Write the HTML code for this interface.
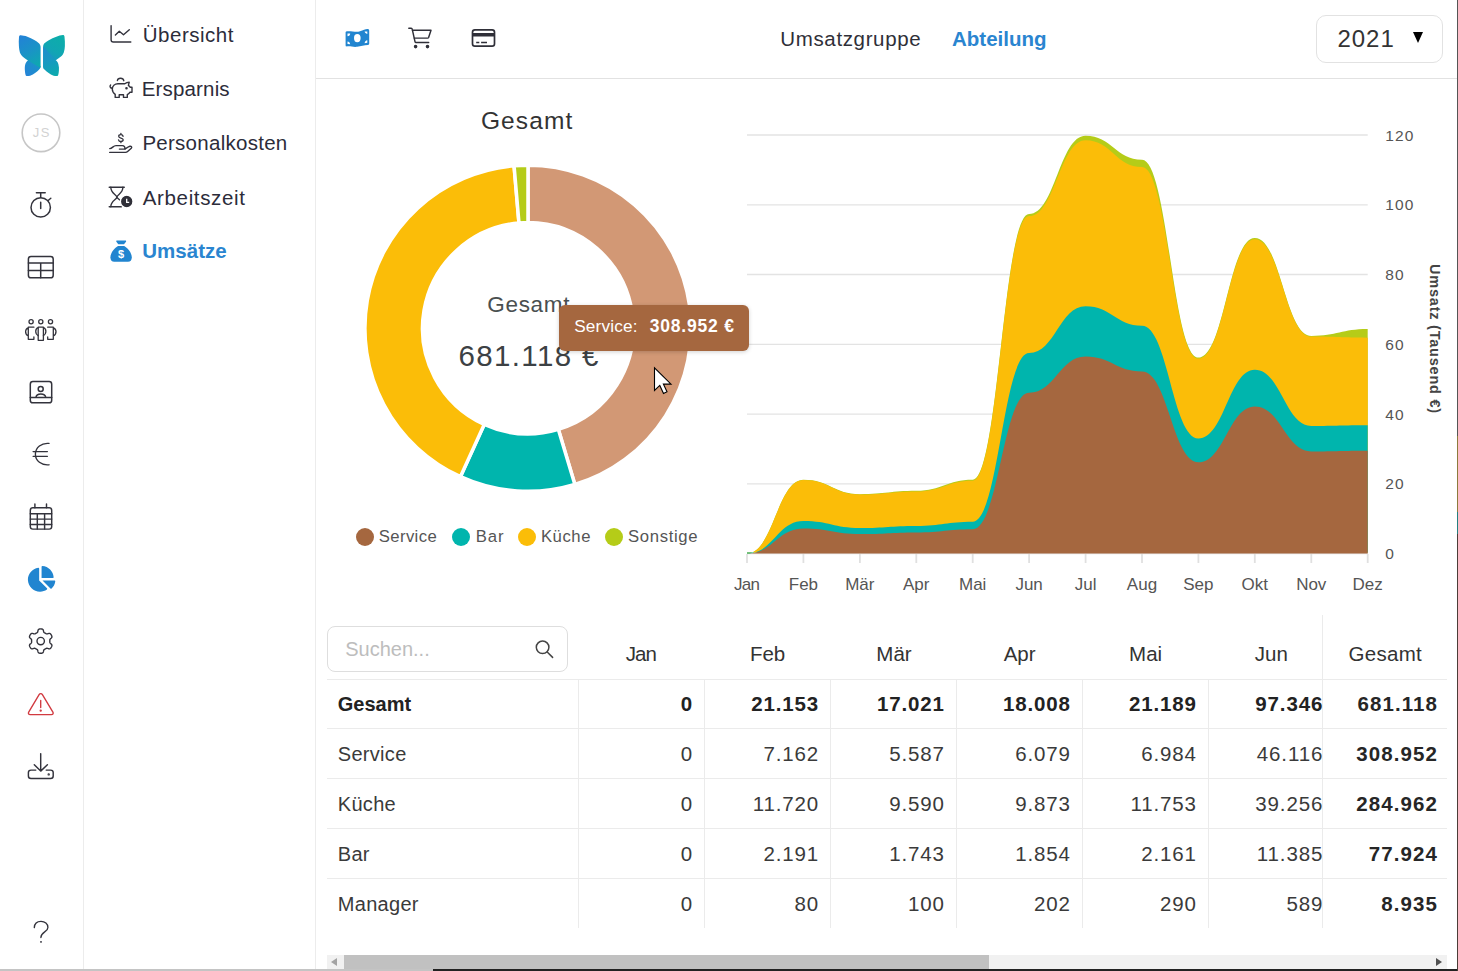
<!DOCTYPE html>
<html lang="de">
<head>
<meta charset="utf-8">
<title>Umsätze</title>
<style>
html,body{margin:0;padding:0;}
body{width:1458px;height:971px;overflow:hidden;background:#fff;position:relative;font-family:"Liberation Sans",sans-serif;color:#333;}
.abs{position:absolute;}
.t{position:absolute;white-space:nowrap;}
.dot{position:absolute;top:527.7px;width:18.2px;height:18.2px;border-radius:50%;}
</style>
</head>
<body>

<!-- sidebar borders -->
<div class="abs" style="left:83px;top:0;width:1px;height:969px;background:#ececec"></div>
<div class="abs" style="left:315px;top:0;width:1px;height:969px;background:#ececec"></div>
<div class="abs" style="left:316px;top:78px;width:1142px;height:1px;background:#e2e2e2"></div>

<!-- year select -->
<div class="abs" style="left:1316px;top:15px;width:125px;height:46px;border:1px solid #e2e2e2;border-radius:10px"></div>
<div class="abs" style="left:1413px;top:32px;width:0;height:0;border-left:5px solid transparent;border-right:5px solid transparent;border-top:11px solid #000"></div>

<!-- charts -->
<svg class="abs" style="left:0;top:0" width="1458" height="971" viewBox="0 0 1458 971">
<line x1="747.0" x2="1367.7" y1="553.6" y2="553.6" stroke="#e3e3e3" stroke-width="1.3"/>
<line x1="747.0" x2="1367.7" y1="483.8" y2="483.8" stroke="#e3e3e3" stroke-width="1.3"/>
<line x1="747.0" x2="1367.7" y1="414.1" y2="414.1" stroke="#e3e3e3" stroke-width="1.3"/>
<line x1="747.0" x2="1367.7" y1="344.3" y2="344.3" stroke="#e3e3e3" stroke-width="1.3"/>
<line x1="747.0" x2="1367.7" y1="274.5" y2="274.5" stroke="#e3e3e3" stroke-width="1.3"/>
<line x1="747.0" x2="1367.7" y1="204.8" y2="204.8" stroke="#e3e3e3" stroke-width="1.3"/>
<line x1="747.0" x2="1367.7" y1="135.0" y2="135.0" stroke="#e3e3e3" stroke-width="1.3"/>

<path d="M747.0,552.4 L747.0,553.6 C773.0,553.6 777.5,479.8 803.4,479.8 C829.4,479.8 833.9,494.2 859.9,494.2 C885.8,494.2 890.3,490.8 916.3,490.8 C942.2,490.8 946.8,479.7 972.7,479.7 C998.7,479.7 1003.2,214.0 1029.1,214.0 C1055.1,214.0 1059.6,135.7 1085.6,135.7 C1111.5,135.7 1116.0,159.8 1142.0,159.8 C1167.9,159.8 1172.5,357.6 1198.4,357.6 C1224.4,357.6 1228.9,237.9 1254.8,237.9 C1280.8,237.9 1285.3,335.9 1311.3,335.9 C1337.2,335.9 1341.7,329.0 1367.7,329.0 L1367.7,552.4 Z" fill="#b5cc18"/>
<path d="M747.0,552.4 L747.0,553.6 C773.0,553.6 777.5,480.1 803.4,480.1 C829.4,480.1 833.9,494.6 859.9,494.6 C885.8,494.6 890.3,491.5 916.3,491.5 C942.2,491.5 946.8,480.7 972.7,480.7 C998.7,480.7 1003.2,216.1 1029.1,216.1 C1055.1,216.1 1059.6,140.2 1085.6,140.2 C1111.5,140.2 1116.0,167.1 1142.0,167.1 C1167.9,167.1 1172.5,358.6 1198.4,358.6 C1224.4,358.6 1228.9,239.3 1254.8,239.3 C1280.8,239.3 1285.3,336.6 1311.3,336.6 C1337.2,336.6 1341.7,337.7 1367.7,337.7 L1367.7,552.4 Z" fill="#fbbd08"/>
<path d="M747.0,552.4 L747.0,553.6 C773.0,553.6 777.5,521.0 803.4,521.0 C829.4,521.0 833.9,528.0 859.9,528.0 C885.8,528.0 890.3,525.9 916.3,525.9 C942.2,525.9 946.8,521.7 972.7,521.7 C998.7,521.7 1003.2,353.0 1029.1,353.0 C1055.1,353.0 1059.6,306.3 1085.6,306.3 C1111.5,306.3 1116.0,325.8 1142.0,325.8 C1167.9,325.8 1172.5,438.5 1198.4,438.5 C1224.4,438.5 1228.9,369.8 1254.8,369.8 C1280.8,369.8 1285.3,425.9 1311.3,425.9 C1337.2,425.9 1341.7,425.2 1367.7,425.2 L1367.7,552.4 Z" fill="#00b5ad"/>
<path d="M747.0,553.6 L747.0,553.6 C773.0,553.6 777.5,528.6 803.4,528.6 C829.4,528.6 833.9,534.1 859.9,534.1 C885.8,534.1 890.3,532.4 916.3,532.4 C942.2,532.4 946.8,529.2 972.7,529.2 C998.7,529.2 1003.2,392.7 1029.1,392.7 C1055.1,392.7 1059.6,356.5 1085.6,356.5 C1111.5,356.5 1116.0,371.5 1142.0,371.5 C1167.9,371.5 1172.5,462.2 1198.4,462.2 C1224.4,462.2 1228.9,406.4 1254.8,406.4 C1280.8,406.4 1285.3,451.4 1311.3,451.4 C1337.2,451.4 1341.7,450.7 1367.7,450.7 L1367.7,553.6 Z" fill="#a5673f"/>
<line x1="747.0" x2="747.0" y1="554" y2="563" stroke="#e0e0e0" stroke-width="1.8"/>
<line x1="803.4" x2="803.4" y1="554" y2="563" stroke="#e0e0e0" stroke-width="1.8"/>
<line x1="859.9" x2="859.9" y1="554" y2="563" stroke="#e0e0e0" stroke-width="1.8"/>
<line x1="916.3" x2="916.3" y1="554" y2="563" stroke="#e0e0e0" stroke-width="1.8"/>
<line x1="972.7" x2="972.7" y1="554" y2="563" stroke="#e0e0e0" stroke-width="1.8"/>
<line x1="1029.1" x2="1029.1" y1="554" y2="563" stroke="#e0e0e0" stroke-width="1.8"/>
<line x1="1085.6" x2="1085.6" y1="554" y2="563" stroke="#e0e0e0" stroke-width="1.8"/>
<line x1="1142.0" x2="1142.0" y1="554" y2="563" stroke="#e0e0e0" stroke-width="1.8"/>
<line x1="1198.4" x2="1198.4" y1="554" y2="563" stroke="#e0e0e0" stroke-width="1.8"/>
<line x1="1254.8" x2="1254.8" y1="554" y2="563" stroke="#e0e0e0" stroke-width="1.8"/>
<line x1="1311.3" x2="1311.3" y1="554" y2="563" stroke="#e0e0e0" stroke-width="1.8"/>
<line x1="1367.7" x2="1367.7" y1="554" y2="563" stroke="#e0e0e0" stroke-width="1.8"/>

<path d="M528.00,165.15 A163.1,163.1 0 0 1 574.88,484.47 L558.37,429.44 A105.7,105.7 0 0 0 528.00,222.60 Z" fill="#d29875" stroke="#fff" stroke-width="3.5" stroke-linejoin="miter"/>
<path d="M574.88,484.47 A163.1,163.1 0 0 1 460.41,476.69 L484.22,424.40 A105.7,105.7 0 0 0 558.37,429.44 Z" fill="#00b5ad" stroke="#fff" stroke-width="3.5" stroke-linejoin="miter"/>
<path d="M460.41,476.69 A163.1,163.1 0 0 1 514.05,165.75 L518.97,222.99 A105.7,105.7 0 0 0 484.22,424.40 Z" fill="#fbbd08" stroke="#fff" stroke-width="3.5" stroke-linejoin="miter"/>
<path d="M514.05,165.75 A163.1,163.1 0 0 1 528.00,165.15 L528.00,222.60 A105.7,105.7 0 0 0 518.97,222.99 Z" fill="#b5cc18" stroke="#fff" stroke-width="3.5" stroke-linejoin="miter"/>

</svg>

<div class="dot" style="left:355.7px;background:#a5673f"></div>
<div class="dot" style="left:451.9px;background:#00b5ad"></div>
<div class="dot" style="left:517.6px;background:#fbbd08"></div>
<div class="dot" style="left:604.9px;background:#b5cc18"></div>

<!-- search box + table lines -->
<div class="abs" style="left:327px;top:626px;width:241px;height:46px;box-sizing:border-box;border:1px solid #dedede;border-radius:8px"></div>
<div class="abs" style="left:327px;top:679px;width:1120px;height:1px;background:#ebebeb"></div>
<div class="abs" style="left:327px;top:728px;width:1120px;height:1px;background:#ebebeb"></div>
<div class="abs" style="left:327px;top:778px;width:1120px;height:1px;background:#ebebeb"></div>
<div class="abs" style="left:327px;top:828px;width:1120px;height:1px;background:#ebebeb"></div>
<div class="abs" style="left:327px;top:878px;width:1120px;height:1px;background:#ebebeb"></div>
<div class="abs" style="left:578px;top:679px;width:1px;height:249px;background:#ebebeb"></div>
<div class="abs" style="left:704px;top:679px;width:1px;height:249px;background:#ebebeb"></div>
<div class="abs" style="left:830px;top:679px;width:1px;height:249px;background:#ebebeb"></div>
<div class="abs" style="left:956px;top:679px;width:1px;height:249px;background:#ebebeb"></div>
<div class="abs" style="left:1082px;top:679px;width:1px;height:249px;background:#ebebeb"></div>
<div class="abs" style="left:1208px;top:679px;width:1px;height:249px;background:#ebebeb"></div>
<div class="abs" style="left:1322px;top:615px;width:1px;height:313px;background:#ebebeb"></div>


<div class="t" style="top:573.50px;font-size:17.00px;line-height:22px;color:#555;letter-spacing:-0.80px;left:546.60px;width:400px;text-align:center;">Jan</div>
<div class="t" style="top:573.50px;font-size:17.00px;line-height:22px;color:#555;left:603.43px;width:400px;text-align:center;">Feb</div>
<div class="t" style="top:573.50px;font-size:17.00px;line-height:22px;color:#555;left:659.85px;width:400px;text-align:center;">Mär</div>
<div class="t" style="top:573.50px;font-size:17.00px;line-height:22px;color:#555;left:716.28px;width:400px;text-align:center;">Apr</div>
<div class="t" style="top:573.50px;font-size:17.00px;line-height:22px;color:#555;left:772.71px;width:400px;text-align:center;">Mai</div>
<div class="t" style="top:573.50px;font-size:17.00px;line-height:22px;color:#555;left:829.14px;width:400px;text-align:center;">Jun</div>
<div class="t" style="top:573.50px;font-size:17.00px;line-height:22px;color:#555;left:885.56px;width:400px;text-align:center;">Jul</div>
<div class="t" style="top:573.50px;font-size:17.00px;line-height:22px;color:#555;left:941.99px;width:400px;text-align:center;">Aug</div>
<div class="t" style="top:573.50px;font-size:17.00px;line-height:22px;color:#555;left:998.42px;width:400px;text-align:center;">Sep</div>
<div class="t" style="top:573.50px;font-size:17.00px;line-height:22px;color:#555;left:1054.85px;width:400px;text-align:center;">Okt</div>
<div class="t" style="top:573.50px;font-size:17.00px;line-height:22px;color:#555;left:1111.27px;width:400px;text-align:center;">Nov</div>
<div class="t" style="top:573.50px;font-size:17.00px;line-height:22px;color:#555;left:1167.70px;width:400px;text-align:center;">Dez</div>
<div class="t" style="top:543.50px;font-size:15.50px;line-height:20px;color:#555;letter-spacing:1.10px;left:1385.20px;">0</div>
<div class="t" style="top:473.50px;font-size:15.50px;line-height:20px;color:#555;letter-spacing:1.10px;left:1385.20px;">20</div>
<div class="t" style="top:404.50px;font-size:15.50px;line-height:20px;color:#555;letter-spacing:1.10px;left:1385.20px;">40</div>
<div class="t" style="top:334.50px;font-size:15.50px;line-height:20px;color:#555;letter-spacing:1.10px;left:1385.20px;">60</div>
<div class="t" style="top:264.50px;font-size:15.50px;line-height:20px;color:#555;letter-spacing:1.10px;left:1385.20px;">80</div>
<div class="t" style="top:194.50px;font-size:15.50px;line-height:20px;color:#555;letter-spacing:1.10px;left:1385.20px;">100</div>
<div class="t" style="top:125.50px;font-size:15.50px;line-height:20px;color:#555;letter-spacing:1.10px;left:1385.20px;">120</div>
<div class="t" style="top:21.00px;font-size:20.50px;line-height:27px;color:#2c2c3a;letter-spacing:0.50px;left:142.80px;">Übersicht</div>
<div class="t" style="top:75.00px;font-size:20.50px;line-height:27px;color:#2c2c3a;letter-spacing:0.15px;left:141.80px;">Ersparnis</div>
<div class="t" style="top:129.00px;font-size:20.50px;line-height:27px;color:#2c2c3a;letter-spacing:0.27px;left:142.40px;">Personalkosten</div>
<div class="t" style="top:184.00px;font-size:20.50px;line-height:27px;color:#2c2c3a;letter-spacing:0.64px;left:142.80px;">Arbeitszeit</div>
<div class="t" style="top:237.00px;font-size:20.50px;line-height:27px;color:#2a85d0;font-weight:bold;left:142.30px;">Umsätze</div>
<div class="t" style="top:25.00px;font-size:20.50px;line-height:27px;color:#2f2f38;letter-spacing:0.64px;left:780.30px;">Umsatzgruppe</div>
<div class="t" style="top:25.00px;font-size:20.50px;line-height:27px;color:#2a85d0;font-weight:bold;left:952.00px;">Abteilung</div>
<div class="t" style="top:23.00px;font-size:24.00px;line-height:31px;color:#333;letter-spacing:1.00px;left:1337.40px;">2021</div>
<div class="t" style="top:104.50px;font-size:24.50px;line-height:32px;color:#333;letter-spacing:1.10px;left:327.15px;width:400px;text-align:center;">Gesamt</div>
<div class="t" style="top:290.00px;font-size:22.50px;line-height:29px;color:#4a4f50;letter-spacing:0.68px;left:328.74px;width:400px;text-align:center;">Gesamt</div>
<div class="t" style="top:336.50px;font-size:29.50px;line-height:38px;color:#3c4144;letter-spacing:1.34px;left:329.17px;width:400px;text-align:center;">681.118 €</div>
<div class="t" style="top:525.50px;font-size:16.70px;line-height:22px;color:#555;letter-spacing:0.37px;left:378.80px;">Service</div>
<div class="t" style="top:525.50px;font-size:16.70px;line-height:22px;color:#555;letter-spacing:0.89px;left:475.70px;">Bar</div>
<div class="t" style="top:525.50px;font-size:16.70px;line-height:22px;color:#555;letter-spacing:0.57px;left:540.90px;">Küche</div>
<div class="t" style="top:525.50px;font-size:16.70px;line-height:22px;color:#555;letter-spacing:0.66px;left:628.00px;">Sonstige</div>
<div class="t" style="top:636.00px;font-size:20.00px;line-height:26px;color:#bdbdbd;left:345.20px;">Suchen...</div>
<div class="t" style="top:640.00px;font-size:20.50px;line-height:27px;color:#333;letter-spacing:-1.00px;left:440.90px;width:400px;text-align:center;">Jan</div>
<div class="t" style="top:640.00px;font-size:20.50px;line-height:27px;color:#333;left:567.60px;width:400px;text-align:center;">Feb</div>
<div class="t" style="top:640.00px;font-size:20.50px;line-height:27px;color:#333;left:694.00px;width:400px;text-align:center;">Mär</div>
<div class="t" style="top:640.00px;font-size:20.50px;line-height:27px;color:#333;left:819.60px;width:400px;text-align:center;">Apr</div>
<div class="t" style="top:640.00px;font-size:20.50px;line-height:27px;color:#333;left:945.60px;width:400px;text-align:center;">Mai</div>
<div class="t" style="top:640.00px;font-size:20.50px;line-height:27px;color:#333;left:1071.40px;width:400px;text-align:center;">Jun</div>
<div class="t" style="top:640.00px;font-size:20.50px;line-height:27px;color:#333;letter-spacing:0.30px;left:1185.35px;width:400px;text-align:center;">Gesamt</div>
<div class="t" style="top:691.00px;font-size:20.00px;line-height:26px;color:#222;font-weight:bold;left:337.80px;">Gesamt</div>
<div class="t" style="top:690.00px;font-size:20.50px;line-height:27px;color:#222;font-weight:bold;letter-spacing:0.85px;left:293.05px;width:400px;text-align:right;">0</div>
<div class="t" style="top:690.00px;font-size:20.50px;line-height:27px;color:#222;font-weight:bold;letter-spacing:0.85px;left:419.05px;width:400px;text-align:right;">21.153</div>
<div class="t" style="top:690.00px;font-size:20.50px;line-height:27px;color:#222;font-weight:bold;letter-spacing:0.85px;left:544.85px;width:400px;text-align:right;">17.021</div>
<div class="t" style="top:690.00px;font-size:20.50px;line-height:27px;color:#222;font-weight:bold;letter-spacing:0.85px;left:670.85px;width:400px;text-align:right;">18.008</div>
<div class="t" style="top:690.00px;font-size:20.50px;line-height:27px;color:#222;font-weight:bold;letter-spacing:0.85px;left:796.85px;width:400px;text-align:right;">21.189</div>
<div class="t" style="top:690.00px;font-size:20.50px;line-height:27px;color:#222;font-weight:bold;letter-spacing:0.85px;left:923.15px;width:400px;text-align:right;">97.346</div>
<div class="t" style="top:690.00px;font-size:20.50px;line-height:27px;color:#262626;font-weight:bold;letter-spacing:1.10px;left:1038.10px;width:400px;text-align:right;">681.118</div>
<div class="t" style="top:741.00px;font-size:20.00px;line-height:26px;color:#3a3a3a;letter-spacing:0.30px;left:337.80px;">Service</div>
<div class="t" style="top:740.00px;font-size:20.50px;line-height:27px;color:#3a3a3a;letter-spacing:0.85px;left:293.05px;width:400px;text-align:right;">0</div>
<div class="t" style="top:740.00px;font-size:20.50px;line-height:27px;color:#3a3a3a;letter-spacing:0.85px;left:419.05px;width:400px;text-align:right;">7.162</div>
<div class="t" style="top:740.00px;font-size:20.50px;line-height:27px;color:#3a3a3a;letter-spacing:0.85px;left:544.85px;width:400px;text-align:right;">5.587</div>
<div class="t" style="top:740.00px;font-size:20.50px;line-height:27px;color:#3a3a3a;letter-spacing:0.85px;left:670.85px;width:400px;text-align:right;">6.079</div>
<div class="t" style="top:740.00px;font-size:20.50px;line-height:27px;color:#3a3a3a;letter-spacing:0.85px;left:796.85px;width:400px;text-align:right;">6.984</div>
<div class="t" style="top:740.00px;font-size:20.50px;line-height:27px;color:#3a3a3a;letter-spacing:0.85px;left:923.15px;width:400px;text-align:right;">46.116</div>
<div class="t" style="top:740.00px;font-size:20.50px;line-height:27px;color:#262626;font-weight:bold;letter-spacing:1.10px;left:1038.10px;width:400px;text-align:right;">308.952</div>
<div class="t" style="top:791.00px;font-size:20.00px;line-height:26px;color:#3a3a3a;letter-spacing:0.30px;left:337.80px;">Küche</div>
<div class="t" style="top:790.00px;font-size:20.50px;line-height:27px;color:#3a3a3a;letter-spacing:0.85px;left:293.05px;width:400px;text-align:right;">0</div>
<div class="t" style="top:790.00px;font-size:20.50px;line-height:27px;color:#3a3a3a;letter-spacing:0.85px;left:419.05px;width:400px;text-align:right;">11.720</div>
<div class="t" style="top:790.00px;font-size:20.50px;line-height:27px;color:#3a3a3a;letter-spacing:0.85px;left:544.85px;width:400px;text-align:right;">9.590</div>
<div class="t" style="top:790.00px;font-size:20.50px;line-height:27px;color:#3a3a3a;letter-spacing:0.85px;left:670.85px;width:400px;text-align:right;">9.873</div>
<div class="t" style="top:790.00px;font-size:20.50px;line-height:27px;color:#3a3a3a;letter-spacing:0.85px;left:796.85px;width:400px;text-align:right;">11.753</div>
<div class="t" style="top:790.00px;font-size:20.50px;line-height:27px;color:#3a3a3a;letter-spacing:0.85px;left:923.15px;width:400px;text-align:right;">39.256</div>
<div class="t" style="top:790.00px;font-size:20.50px;line-height:27px;color:#262626;font-weight:bold;letter-spacing:1.10px;left:1038.10px;width:400px;text-align:right;">284.962</div>
<div class="t" style="top:841.00px;font-size:20.00px;line-height:26px;color:#3a3a3a;letter-spacing:0.30px;left:337.80px;">Bar</div>
<div class="t" style="top:840.00px;font-size:20.50px;line-height:27px;color:#3a3a3a;letter-spacing:0.85px;left:293.05px;width:400px;text-align:right;">0</div>
<div class="t" style="top:840.00px;font-size:20.50px;line-height:27px;color:#3a3a3a;letter-spacing:0.85px;left:419.05px;width:400px;text-align:right;">2.191</div>
<div class="t" style="top:840.00px;font-size:20.50px;line-height:27px;color:#3a3a3a;letter-spacing:0.85px;left:544.85px;width:400px;text-align:right;">1.743</div>
<div class="t" style="top:840.00px;font-size:20.50px;line-height:27px;color:#3a3a3a;letter-spacing:0.85px;left:670.85px;width:400px;text-align:right;">1.854</div>
<div class="t" style="top:840.00px;font-size:20.50px;line-height:27px;color:#3a3a3a;letter-spacing:0.85px;left:796.85px;width:400px;text-align:right;">2.161</div>
<div class="t" style="top:840.00px;font-size:20.50px;line-height:27px;color:#3a3a3a;letter-spacing:0.85px;left:923.15px;width:400px;text-align:right;">11.385</div>
<div class="t" style="top:840.00px;font-size:20.50px;line-height:27px;color:#262626;font-weight:bold;letter-spacing:1.10px;left:1038.10px;width:400px;text-align:right;">77.924</div>
<div class="t" style="top:891.00px;font-size:20.00px;line-height:26px;color:#3a3a3a;letter-spacing:0.30px;left:337.80px;">Manager</div>
<div class="t" style="top:890.00px;font-size:20.50px;line-height:27px;color:#3a3a3a;letter-spacing:0.85px;left:293.05px;width:400px;text-align:right;">0</div>
<div class="t" style="top:890.00px;font-size:20.50px;line-height:27px;color:#3a3a3a;letter-spacing:0.85px;left:419.05px;width:400px;text-align:right;">80</div>
<div class="t" style="top:890.00px;font-size:20.50px;line-height:27px;color:#3a3a3a;letter-spacing:0.85px;left:544.85px;width:400px;text-align:right;">100</div>
<div class="t" style="top:890.00px;font-size:20.50px;line-height:27px;color:#3a3a3a;letter-spacing:0.85px;left:670.85px;width:400px;text-align:right;">202</div>
<div class="t" style="top:890.00px;font-size:20.50px;line-height:27px;color:#3a3a3a;letter-spacing:0.85px;left:796.85px;width:400px;text-align:right;">290</div>
<div class="t" style="top:890.00px;font-size:20.50px;line-height:27px;color:#3a3a3a;letter-spacing:0.85px;left:923.15px;width:400px;text-align:right;">589</div>
<div class="t" style="top:890.00px;font-size:20.50px;line-height:27px;color:#262626;font-weight:bold;letter-spacing:1.10px;left:1038.10px;width:400px;text-align:right;">8.935</div>


<!-- tooltip -->
<div class="abs" style="left:559px;top:305px;width:190px;height:46px;background:#a5673f;border-radius:6px;box-shadow:0 1px 4px rgba(0,0,0,.18)"></div>
<div class="t" style="left:574.2px;top:314.7px;font-size:17.2px;line-height:23px;color:#fff;letter-spacing:0.17px">Service:</div>
<div class="t" style="left:649.7px;top:314.6px;font-size:17.5px;line-height:23px;color:#fff;font-weight:bold;letter-spacing:0.8px">308.952 €</div>

<!-- y-axis title -->
<div class="abs" style="left:1434.5px;top:338.7px;width:0;height:0"><div style="position:absolute;left:-100px;top:-11px;width:200px;height:22px;line-height:22px;text-align:center;font-size:14.5px;font-weight:bold;color:#444;letter-spacing:0.78px;transform:rotate(90deg);white-space:nowrap">Umsatz (Tausend €)</div></div>

<!-- scrollbar -->
<div class="abs" style="left:327px;top:955px;width:1120px;height:14px;background:#f1f1f1"></div>
<div class="abs" style="left:344px;top:955px;width:645px;height:14px;background:#c1c1c1"></div>
<div class="abs" style="left:331px;top:958px;width:0;height:0;border-top:4px solid transparent;border-bottom:4px solid transparent;border-right:6px solid #a3a3a3"></div>
<div class="abs" style="left:1436px;top:958px;width:0;height:0;border-top:4px solid transparent;border-bottom:4px solid transparent;border-left:6px solid #505050"></div>

<svg class="abs" style="left:0;top:0" width="1458" height="971" viewBox="0 0 1458 971" fill="none" stroke-linecap="round" stroke-linejoin="round">
<defs>
<linearGradient id="g1" gradientUnits="userSpaceOnUse" x1="21" y1="36" x2="40" y2="66"><stop offset="0" stop-color="#2282d6"/><stop offset="0.5" stop-color="#1a93c6"/><stop offset="1" stop-color="#0daaae"/></linearGradient>
<linearGradient id="g2" gradientUnits="userSpaceOnUse" x1="38" y1="64" x2="26" y2="76"><stop offset="0" stop-color="#1a93c8"/><stop offset="1" stop-color="#2583d8"/></linearGradient>
<linearGradient id="g3" gradientUnits="userSpaceOnUse" x1="63" y1="36" x2="47" y2="60"><stop offset="0" stop-color="#0caea9"/><stop offset="0.6" stop-color="#11a6b3"/><stop offset="1" stop-color="#1a95c4"/></linearGradient>
<linearGradient id="g4" gradientUnits="userSpaceOnUse" x1="44" y1="48" x2="57" y2="75"><stop offset="0" stop-color="#208dcd"/><stop offset="0.5" stop-color="#179ac0"/><stop offset="1" stop-color="#0caaad"/></linearGradient>
</defs>
<!-- logo -->
<g stroke="none">
<path d="M27.9,60.4 C26.6,61.5 25.7,62.8 25.3,64.3 C24.7,66.4 24.7,68.5 24.9,70.7 C25,72.2 25.2,73.6 25.6,75 C25.8,75.9 26.4,76.2 27.2,76.1 C28.2,76 29.2,75.9 30.1,75.7 C32,75.1 33.8,74 35.4,72.8 C36.8,71.8 38.1,70.7 39.2,69.6 C39.8,69 40.3,68.3 40.5,67.5 L40.5,66 L28.4,59.2 Z" fill="url(#g2)"/>
<path d="M40.6,66.9 L40.6,46.8 C40.4,45.2 40,44.2 39.2,43.4 C37.6,41.8 36,40.8 34.3,39.9 C32,38.6 29.8,37.5 27.4,36.7 C25,35.9 22.6,35.4 20.6,35.3 C19.6,35.3 19.1,35.9 19,36.9 C18.7,40 18.7,43 18.9,46.1 C19,48.4 19.3,50.6 19.9,52.5 C20.6,54.4 21.7,55.8 23.1,56.9 C24.6,58.1 26.2,59.2 27.9,60.4 L39.9,67.4 C40.3,67.5 40.6,67.3 40.6,66.9 Z" fill="url(#g1)"/>
<path d="M43.1,67.4 L43.1,46.8 C43.2,45.2 43.5,44.2 44.2,43.4 C45.6,42 47.2,41 48.8,40.2 C51.2,38.8 53.7,37.6 56.3,36.7 C58.5,35.9 60.8,35.3 62.9,35.1 C63.9,35.1 64.4,35.7 64.5,36.7 C64.9,39.8 65,43 64.9,46.1 C64.8,48.4 64.5,50.6 63.8,52.5 C63.1,54.3 62,55.7 60.6,56.8 C59.1,58 57.4,59.1 55.8,60.3 L43.1,67.4 Z" fill="url(#g3)"/>
<path d="M43.1,46.6 C46,49.5 50.5,54.5 55.8,60.3 C57.1,61.4 58,62.7 58.4,64.3 C59,66.4 59.1,68.5 58.9,70.7 C58.8,72.2 58.6,73.6 58.2,75 C58,75.9 57.4,76.2 56.6,76.1 C55.6,76 54.6,75.9 53.6,75.7 C51.7,75.1 50,74 48.3,72.8 C46.9,71.8 45.6,70.7 44.5,69.6 C43.7,68.9 43.2,68.2 43.1,67.4 Z" fill="url(#g4)"/>
</g>
<!-- avatar -->
<circle cx="41" cy="132.8" r="18.8" stroke="#c6c6c6" stroke-width="1.6"/>
<!-- stopwatch -->
<g stroke="#33333c" stroke-width="1.5">
<circle cx="40.7" cy="207.4" r="9.7"/>
<path d="M36.4,192.8 H45.2 M40.7,192.8 V197.6 M40.7,202.2 V208.6 M48.2,200.5 L50.8,198.3"/>
</g>
<!-- table -->
<g stroke="#33333c" stroke-width="1.5">
<rect x="28.4" y="256.4" width="24.8" height="21.4" rx="2.6"/>
<path d="M28.4,263.1 H53.2 M28.4,270.5 H53.2 M40.7,263.1 V277.8"/>
</g>
<!-- users -->
<g stroke="#33333c" stroke-width="1.3">
<circle cx="31.1" cy="321.7" r="2.1"/><circle cx="40.8" cy="321.7" r="2.1"/><circle cx="50.5" cy="321.7" r="2.1"/>
<path d="M38.2,327.2 H43.4 V340.3 H38.2 Z"/>
<path d="M38.2,327.6 C35.2,328.4 34.6,333.5 38.2,335.6 M43.4,327.6 C46.4,328.4 47,333.5 43.4,335.6"/>
<path d="M33.9,327.2 H28.3 V339.3 H33.9 V337 M28.3,327.8 C25,328.8 24.4,334 28.3,336"/>
<path d="M47.7,327.2 H53.3 V339.3 H47.7 V337 M53.3,327.8 C56.6,328.8 57.2,334 53.3,336"/>
</g>
<!-- portrait -->
<g stroke="#33333c" stroke-width="1.5">
<rect x="30.3" y="381.6" width="21.4" height="21.2" rx="2.6"/>
<circle cx="40.7" cy="389" r="2.5"/>
<path d="M30.3,397.5 H51.7 M35.9,397.3 C36.6,392.8 45,392.8 45.8,397.3"/>
</g>
<!-- euro -->
<g stroke="#33333c" stroke-width="1.35">
<path d="M49,443.4 C41.5,442.6 35.4,447.6 35.4,454.2 C35.4,460.8 41.5,465.6 49,464.8"/>
<path d="M33.1,451.6 H47.4 M33.1,456.3 H47.4"/>
</g>
<!-- calendar -->
<g stroke="#33333c" stroke-width="1.45">
<rect x="30.3" y="507.8" width="21.4" height="21.3" rx="2.6"/>
<path d="M34.9,504 V507.8 M46.5,504 V507.8 M30.3,513.7 H51.7 M30.3,519.1 H51.7 M30.3,524.4 H51.7 M37.3,513.7 V529.1 M44.6,513.7 V529.1"/>
</g>
<!-- pie (solid) -->
<g transform="translate(27.9,566) scale(0.0503)" stroke="none" fill="#2185d0">
<path d="M527.79 288H290.5l158.03 158.03c6.04 6.04 15.98 6.53 22.19.68 38.7-36.46 65.32-85.61 73.13-140.86 1.34-9.46-6.51-17.85-16.06-17.85zm-15.83-64.8C503.72 103.74 408.26 8.28 288.8.04 279.68-.59 272 7.1 272 16.24V240h223.77c9.14 0 16.82-7.68 16.19-16.8zM224 288V50.71c0-9.55-8.39-17.4-17.84-16.06C86.99 51.49-4.1 155.6.14 280.37 4.5 408.51 114.83 513.59 243.03 511.98c50.4-.63 96.97-16.87 135.26-44.03 7.9-5.6 8.42-17.23 1.57-24.08L224 288z"/>
</g>
<!-- gear -->
<g stroke="#33333c" stroke-width="1.4"><path d="M49.80,641.10 L49.80,641.34 L49.80,641.58 L49.80,641.82 L49.80,642.06 L49.82,642.30 L49.87,642.55 L49.98,642.82 L50.20,643.12 L50.54,643.46 L50.99,643.86 L51.42,644.27 L51.72,644.68 L51.88,645.06 L51.92,645.41 L51.88,645.73 L51.80,646.04 L51.69,646.34 L51.56,646.63 L51.42,646.92 L51.27,647.20 L51.10,647.47 L50.92,647.74 L50.74,648.00 L50.53,648.24 L50.30,648.47 L50.04,648.66 L49.72,648.80 L49.31,648.85 L48.81,648.79 L48.23,648.63 L47.67,648.44 L47.20,648.32 L46.83,648.28 L46.54,648.31 L46.30,648.40 L46.08,648.50 L45.87,648.62 L45.66,648.74 L45.46,648.86 L45.25,648.98 L45.04,649.10 L44.84,649.22 L44.63,649.33 L44.42,649.46 L44.22,649.60 L44.03,649.77 L43.85,650.00 L43.70,650.34 L43.58,650.81 L43.46,651.39 L43.31,651.97 L43.11,652.44 L42.86,652.76 L42.58,652.97 L42.28,653.10 L41.97,653.18 L41.66,653.24 L41.34,653.27 L41.02,653.29 L40.70,653.30 L40.38,653.29 L40.06,653.27 L39.74,653.24 L39.43,653.18 L39.12,653.10 L38.82,652.97 L38.54,652.76 L38.29,652.44 L38.09,651.97 L37.94,651.39 L37.82,650.81 L37.70,650.34 L37.55,650.00 L37.37,649.77 L37.18,649.60 L36.98,649.46 L36.77,649.33 L36.56,649.22 L36.36,649.10 L36.15,648.98 L35.94,648.86 L35.74,648.74 L35.53,648.62 L35.32,648.50 L35.10,648.40 L34.86,648.31 L34.57,648.28 L34.20,648.32 L33.73,648.44 L33.17,648.63 L32.59,648.79 L32.09,648.85 L31.68,648.80 L31.36,648.66 L31.10,648.47 L30.87,648.24 L30.66,648.00 L30.48,647.74 L30.30,647.47 L30.13,647.20 L29.98,646.92 L29.84,646.63 L29.71,646.34 L29.60,646.04 L29.52,645.73 L29.48,645.41 L29.52,645.06 L29.68,644.68 L29.98,644.27 L30.41,643.86 L30.86,643.46 L31.20,643.12 L31.42,642.82 L31.53,642.55 L31.58,642.30 L31.60,642.06 L31.60,641.82 L31.60,641.58 L31.60,641.34 L31.60,641.10 L31.60,640.86 L31.60,640.62 L31.60,640.38 L31.60,640.14 L31.58,639.90 L31.53,639.65 L31.42,639.38 L31.20,639.08 L30.86,638.74 L30.41,638.34 L29.98,637.93 L29.68,637.52 L29.52,637.14 L29.48,636.79 L29.52,636.47 L29.60,636.16 L29.71,635.86 L29.84,635.57 L29.98,635.28 L30.13,635.00 L30.30,634.73 L30.48,634.46 L30.66,634.20 L30.87,633.96 L31.10,633.73 L31.36,633.54 L31.68,633.40 L32.09,633.35 L32.59,633.41 L33.17,633.57 L33.73,633.76 L34.20,633.88 L34.57,633.92 L34.86,633.89 L35.10,633.80 L35.32,633.70 L35.53,633.58 L35.74,633.46 L35.94,633.34 L36.15,633.22 L36.36,633.10 L36.56,632.98 L36.77,632.87 L36.98,632.74 L37.18,632.60 L37.37,632.43 L37.55,632.20 L37.70,631.86 L37.82,631.39 L37.94,630.81 L38.09,630.23 L38.29,629.76 L38.54,629.44 L38.82,629.23 L39.12,629.10 L39.43,629.02 L39.74,628.96 L40.06,628.93 L40.38,628.91 L40.70,628.90 L41.02,628.91 L41.34,628.93 L41.66,628.96 L41.97,629.02 L42.28,629.10 L42.58,629.23 L42.86,629.44 L43.11,629.76 L43.31,630.23 L43.46,630.81 L43.58,631.39 L43.70,631.86 L43.85,632.20 L44.03,632.43 L44.22,632.60 L44.42,632.74 L44.63,632.87 L44.84,632.98 L45.04,633.10 L45.25,633.22 L45.46,633.34 L45.66,633.46 L45.87,633.58 L46.08,633.70 L46.30,633.80 L46.54,633.89 L46.83,633.92 L47.20,633.88 L47.67,633.76 L48.23,633.57 L48.81,633.41 L49.31,633.35 L49.72,633.40 L50.04,633.54 L50.30,633.73 L50.53,633.96 L50.74,634.20 L50.92,634.46 L51.10,634.73 L51.27,635.00 L51.42,635.28 L51.56,635.57 L51.69,635.86 L51.80,636.16 L51.88,636.47 L51.92,636.79 L51.88,637.14 L51.72,637.52 L51.42,637.93 L50.99,638.34 L50.54,638.74 L50.20,639.08 L49.98,639.38 L49.87,639.65 L49.82,639.90 L49.80,640.14 L49.80,640.38 L49.80,640.62 L49.80,640.86 Z" stroke-linejoin="round"/><circle cx="40.7" cy="641.1" r="3.7"/></g>
<!-- warning -->
<g stroke="#d13a40" stroke-width="1.35">
<path d="M39.1,694.6 L28.7,712.2 C27.9,713.6 28.7,714.6 30.2,714.6 H51.4 C52.9,714.6 53.7,713.6 52.9,712.2 L42.4,694.6 C41.6,693.2 39.9,693.2 39.1,694.6 Z"/>
<path d="M40.7,700.4 V707.6"/>
<circle cx="40.7" cy="710.6" r="0.5" fill="#d13a40"/>
</g>
<!-- download -->
<g stroke="#33333c" stroke-width="1.45">
<path d="M40.7,753.6 V770.8 M34.3,764.8 L40.7,771.1 L47.4,764.8"/>
<path d="M35.8,770.1 H31 C29.4,770.1 28.4,771.1 28.4,772.6 V775.9 C28.4,777.4 29.4,778.4 31,778.4 H50.6 C52.2,778.4 53.2,777.4 53.2,775.9 V772.6 C53.2,771.1 52.2,770.1 50.6,770.1 H46.2"/>
<circle cx="48.7" cy="774.4" r="0.45" fill="#33333c"/>
</g>
<!-- question -->
<g stroke="#33333c" stroke-width="1.35">
<path d="M34.3,927.6 C34.5,923.7 37.3,921.4 41,921.4 C44.9,921.4 47.9,923.9 47.9,927.4 C47.9,932.2 40.9,931.6 40.9,937.6"/>
<rect x="40.2" y="941.1" width="1.6" height="1.6" fill="#33333c" stroke="none"/>
</g>

<!-- ===== second nav icons ===== -->
<!-- chart-line -->
<g stroke="#33333d" stroke-width="1.4">
<path d="M111.1,25.6 V39.8 C111.1,41.3 111.8,42 113.3,42 H130.8"/>
<path d="M115.4,35.1 L119.3,31.3 L123.5,34.8 L129.3,29.7"/>
</g>
<!-- piggy -->
<g stroke="#33333d" stroke-width="1.4">
<path d="M117.4,80.5 C117.9,77.5 123.2,77.5 123.8,80.7"/>
<path d="M118,83.8 H124.8 C126,82.8 127.6,82.3 129.2,82.3 L128.4,85.4 C129.4,86.2 130,86.8 130.3,87.3 H132 V92.2 H130 C129.4,93.2 128.4,94 127.3,94.6 V97.4 H123.5 V94.7 H119.2 V97.4 H115.2 V94.3 C113.3,93 112.3,91 112.3,89.3 C112.3,86 114.8,83.8 118,83.8 Z"/>
<path d="M112.3,88.3 C110.4,88.3 109.3,86.2 110.6,84.9"/>
<circle cx="126.5" cy="88.3" r="0.6" fill="#33333d"/>
</g>
<!-- hand holding usd -->
<g stroke="#33333d" stroke-width="1.4">
<path d="M109.7,152.4 H125.4 C126.3,152.4 127,152.1 127.6,151.5 L131.3,148.2 C132.3,147.2 131.2,146.1 129.9,146.3 C128.8,146.5 127.8,147.2 125.1,148.9"/>
<path d="M109.7,148.6 C112.5,148.6 113,145.6 116,145.6 H122.3 C124.3,145.6 125.2,147.2 124.9,149.1 H119.4"/>
</g>
<path d="M123.4,136.3 C123.1,135 122,134.4 120.8,134.4 C119.4,134.4 118.4,135.2 118.4,136.3 C118.4,139 123.5,137.7 123.5,140.4 C123.5,141.6 122.4,142.3 120.9,142.3 C119.5,142.3 118.5,141.6 118.2,140.4 M120.9,133 V134.4 M120.9,142.3 V143.6" stroke="#33333d" stroke-width="1.5" transform="translate(120.9,138) scale(0.88) translate(-120.9,-138.3)"/>
<!-- hourglass-clock -->
<g stroke="#33333d" stroke-width="1.4">
<path d="M109.2,187.3 H124.3 M109.2,206.8 H121.4"/>
<path d="M110.8,187.3 C110.8,193.5 116.6,194.5 116.9,197.1 C116.6,199.7 110.8,200.6 110.8,206.8"/>
<path d="M122.9,187.3 C122.9,193.5 117.1,194.5 116.9,197.1 C117.3,198.6 119.5,199.5 121,201"/>
</g>
<circle cx="126.7" cy="201.5" r="6.3" fill="#2f2f38" stroke="#fff" stroke-width="1.3"/>
<path d="M126.7,198.8 V202.3 H129.2" stroke="#fff" stroke-width="1.3" stroke-linecap="butt" stroke-linejoin="miter"/>
<!-- money bag -->
<g stroke="none" fill="#2185d0">
<path d="M117,240.6 H125.4 C126,240.6 126.3,241.2 126,241.7 L124,244.3 H118.3 L116.4,241.7 C116.1,241.2 116.4,240.6 117,240.6 Z"/>
<path d="M118,245.9 H124.2 C128.6,248.6 131.8,253.3 131.8,257.5 C131.8,260.2 130.3,261.8 128,261.8 H114.2 C111.9,261.8 110.4,260.2 110.4,257.5 C110.4,253.3 113.6,248.6 118,245.9 Z"/>
</g>
<text x="121.1" y="258.2" font-family="Liberation Sans, sans-serif" font-size="11" font-weight="bold" fill="#fff" text-anchor="middle" stroke="none">$</text>

<!-- ===== top bar icons ===== -->
<!-- money bill wave -->
<g stroke="none">
<path d="M345.6,32.6 C345.6,31.8 346,31.3 346.8,31.2 C352,30.8 356,32.5 360,31.2 C363.5,30 366,28.6 368,29 C368.8,29.2 369.2,29.7 369.2,30.5 V43.6 C369.2,44.4 368.8,44.9 368,44.9 C364,45 361,46.2 357,46.8 C353,47.4 350,45.6 346.8,46.4 C346,46.5 345.6,46 345.6,45.2 Z" fill="#2185d0"/>
<ellipse cx="357.3" cy="38.1" rx="3.3" ry="4.2" fill="#fff"/>
<path d="M347.5,33.6 L350.2,33.4 C350.2,35 349.2,36 347.5,36.2 Z M367.3,31.4 V34 C365.8,33.8 364.8,32.8 364.6,31.6 Z M347.5,44 V41.4 C349,41.6 350,42.6 350.2,44.2 Z M367.3,42.8 L364.6,43.2 C364.7,41.6 365.8,40.4 367.3,40.2 Z" fill="#fff"/>
</g>
<!-- cart -->
<g stroke="#2f2f38" stroke-width="1.45">
<path d="M408.8,28.3 H411.2 C411.8,28.3 412.1,28.6 412.2,29.2 L415,41.6 C415.1,42.2 415.5,42.5 416.1,42.5 H428.7"/>
<path d="M412.5,30.2 H431 L428.6,37.4 C428.4,37.9 428.1,38.1 427.6,38.1 H414.3"/>
<circle cx="415.6" cy="46.6" r="1.1" fill="#2f2f38"/><circle cx="427.5" cy="46.6" r="1.1" fill="#2f2f38"/>
</g>
<!-- credit card -->
<g stroke="#2f2f38">
<rect x="472.5" y="29.9" width="22" height="16.2" rx="2.4" stroke-width="1.7"/>
<rect x="472.5" y="33" width="22" height="3.5" fill="#2f2f38" stroke="none"/>
<path d="M476.2,42.5 H479.3 M481.1,42.5 H487" stroke-width="1.4" stroke-linecap="butt"/>
</g>
<!-- search -->
<g stroke="#444" stroke-width="1.5">
<circle cx="542.6" cy="647.3" r="6.3"/>
<path d="M547.2,652 L552.6,657.4"/>
</g>
</svg>

<div class="t" style="left:21px;top:123px;width:40px;text-align:center;font-size:13px;line-height:20px;color:#d2d2d2;letter-spacing:1.5px;text-indent:1.5px">JS</div>

<!-- mouse cursor -->
<svg class="abs" style="left:650px;top:363px" width="26" height="34" viewBox="-4 -4 26 34"><path d="M0.5,0.8 V23.4 L5.8,18.4 L9.5,26.4 L13,24.8 L9.4,17.1 H17 Z" fill="#fff" stroke="#000" stroke-width="1.1" stroke-linejoin="miter"/></svg>

<!-- window edges -->
<div class="abs" style="left:0;top:969px;width:1458px;height:2px;background:#c4c4c4"></div>
<div class="abs" style="left:433px;top:969px;width:1025px;height:2px;background:#222"></div>
<div class="abs" style="left:1457px;top:0;width:1px;height:971px;background:linear-gradient(to bottom,#555 0,#555 436px,#8c7a3c 436px,#8c7a3c 512px,#237f80 512px,#237f80 534px,#4b3d38 534px,#4b3d38 971px)"></div>

</body>
</html>
